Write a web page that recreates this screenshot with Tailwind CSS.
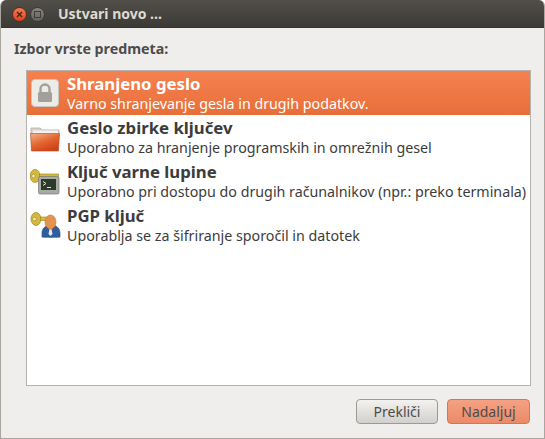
<!DOCTYPE html>
<html lang="sl">
<head>
<meta charset="UTF-8" />
<title>Ustvari novo</title>
<script src="https://cdn.jsdelivr.net/npm/@tailwindcss/browser@4"></script>
</head>
<body class="w-[545px] h-[439px] overflow-hidden bg-white font-['Noto_Sans',sans-serif]">
<div class="w-[545px] h-[439px] flex flex-col rounded-t-[6px] overflow-hidden bg-[#f0eeec] border-x border-b border-[#a8a69f]">
  <!-- title bar -->
  <div class="h-[28px] -mx-px shrink-0 flex items-center pl-[12px] bg-gradient-to-b from-[#524f49] to-[#3b3a35] border-b border-[#33322e]">
    <div class="mt-px w-[15px] h-[15px] rounded-full bg-gradient-to-b from-[#f47a4e] to-[#d9431c] border border-[#5a2a18] flex items-center justify-center">
      <svg width="7" height="7" viewBox="0 0 7 7"><path d="M1 1l5 5M6 1l-5 5" stroke="#4a2116" stroke-width="1.4"/></svg>
    </div>
    <div class="mt-px ml-[3px] w-[15px] h-[15px] rounded-full bg-gradient-to-b from-[#88857e] to-[#65635c] border border-[#3a3833] flex items-center justify-center">
      <div class="w-[7px] h-[7px] border border-[#3f3d38]"></div>
    </div>
    <span class="ml-[13px] text-[14px] font-bold text-[#dfdbd2]">Ustvari novo ...</span>
  </div>

  <div class="flex-1 flex flex-col px-[13px]">
    <p class="mt-[11px] h-[20px] text-[14.25px] leading-[20px] font-bold text-[#4c4c4c] whitespace-nowrap">Izbor vrste predmeta:</p>

    <!-- item list -->
    <div class="mt-[11px] ml-[12px] w-[505px] h-[316px] bg-white border border-[#b5b3ac] text-[#3c3c3c]">
      <div class="h-[44px] flex items-center bg-gradient-to-b from-[#f68150] to-[#e76f39] text-white">
        <div class="w-[40px] pl-[3px]">
          <svg width="32" height="32" viewBox="0 0 32 32" class="block">
            <rect x="1.5" y="2.5" width="27" height="27" rx="3.5" fill="#ecebe8" stroke="#c9c6c0"/>
            <path d="M10.5 15v-3a4.5 4.5 0 0 1 9 0v3" fill="none" stroke="#a2a09b" stroke-width="2.4"/>
            <rect x="8" y="15" width="14" height="10" rx="1.5" fill="#a2a09b"/>
          </svg>
        </div>
        <div class="self-start pt-[3px]">
          <p class="text-[16.75px] leading-[20px] font-bold whitespace-nowrap">Shranjeno geslo</p>
          <p class="mt-px text-[14.25px] leading-[18px] whitespace-nowrap">Varno shranjevanje gesla in drugih podatkov.</p>
        </div>
      </div>
      <div class="h-[44px] flex items-center">
        <div class="w-[40px] pl-[3px]">
          <svg width="32" height="32" viewBox="0 0 32 32" class="block">
            <defs><linearGradient id="fold" x1="0" y1="0" x2="0.6" y2="1"><stop offset="0" stop-color="#f4b48a"/><stop offset="0.55" stop-color="#e2662f"/><stop offset="1" stop-color="#cf431a"/></linearGradient></defs>
            <path d="M1 7h9l2 2h17v6H1z" fill="#d8d4cd" stroke="#a8a49c" stroke-width="0.7"/>
            <rect x="3" y="9.5" width="25" height="4" fill="#f4f2ee"/>
            <path d="M0.5 12.5h29l-1 17.5H1.5z" fill="url(#fold)" stroke="#b6451e" stroke-width="0.6"/>
          </svg>
        </div>
        <div class="self-start pt-[3px]">
          <p class="text-[16.75px] leading-[20px] font-bold whitespace-nowrap">Geslo zbirke ključev</p>
          <p class="mt-px text-[14.25px] leading-[18px] whitespace-nowrap">Uporabno za hranjenje programskih in omrežnih gesel</p>
        </div>
      </div>
      <div class="h-[44px] flex items-center">
        <div class="w-[40px] pl-[3px]">
          <svg width="32" height="32" viewBox="0 0 32 32" class="block">
            <ellipse cx="5" cy="11" rx="5" ry="6.5" fill="#d6b93c" stroke="#9a8420" stroke-width="0.7"/>
            <circle cx="3.5" cy="11" r="1.8" fill="#f3ecc8" stroke="#9a8420" stroke-width="0.6"/>
            <rect x="9.5" y="9" width="19" height="3.5" fill="#d6b93c" stroke="#9a8420" stroke-width="0.6"/>
            <rect x="8.5" y="11.5" width="20.5" height="17.5" rx="1.5" fill="#a9aba4" stroke="#777970" stroke-width="0.7"/>
            <rect x="11" y="14" width="15" height="11" fill="#2c3a2a"/>
            <path d="M13 16.5l3 2-3 2" fill="none" stroke="#e6e6e0" stroke-width="1"/>
            <path d="M17 22.5h4" stroke="#e6e6e0"/>
          </svg>
        </div>
        <div class="self-start pt-[3px]">
          <p class="text-[16.75px] leading-[20px] font-bold whitespace-nowrap">Ključ varne lupine</p>
          <p class="mt-px text-[14.25px] leading-[18px] whitespace-nowrap">Uporabno pri dostopu do drugih računalnikov (npr.: preko terminala)</p>
        </div>
      </div>
      <div class="h-[44px] flex items-center">
        <div class="w-[40px] pl-[3px]">
          <svg width="32" height="32" viewBox="0 0 32 32" class="block">
            <ellipse cx="6" cy="10" rx="5" ry="6.5" fill="#d6b93c" stroke="#9a8420" stroke-width="0.7"/>
            <circle cx="4.5" cy="10" r="1.8" fill="#f3ecc8" stroke="#9a8420" stroke-width="0.6"/>
            <rect x="10.5" y="8" width="12" height="3.5" fill="#d6b93c" stroke="#9a8420" stroke-width="0.6"/>
            <path d="M12 28v-4c0-5 4-8 9-8s9 3 9 8v4c0 .5-18 .5-18 0z" fill="#2f5d9e" stroke="#234a80" stroke-width="0.6"/>
            <path d="M18.5 18h4l-1 2 1 5-2 2-2-2 1-5z" fill="#e8e8e4"/>
            <ellipse cx="20.5" cy="13" rx="5.5" ry="7" fill="#e3934f" stroke="#c27434" stroke-width="0.6"/>
          </svg>
        </div>
        <div class="self-start pt-[3px]">
          <p class="text-[16.75px] leading-[20px] font-bold whitespace-nowrap">PGP ključ</p>
          <p class="mt-px text-[14.25px] leading-[18px] whitespace-nowrap">Uporablja se za šifriranje sporočil in datotek</p>
        </div>
      </div>
    </div>

    <!-- buttons -->
    <div class="mt-[13px] ml-[12px] w-[504px] flex justify-end gap-[9px]">
      <button class="w-[82px] h-[25px] rounded-[4px] border border-[#9c9a94] bg-gradient-to-b from-[#f3f2f0] to-[#d2d0cc] text-[14px] leading-[20px] text-[#4c4c4c]">Prekliči</button>
      <button class="w-[83px] h-[25px] rounded-[4px] border border-[#c87a5c] bg-gradient-to-b from-[#f4a184] to-[#ec8a68] text-[14px] leading-[20px] text-[#4c4c4c]">Nadaljuj</button>
    </div>
  </div>
</div>
</body>
</html>
